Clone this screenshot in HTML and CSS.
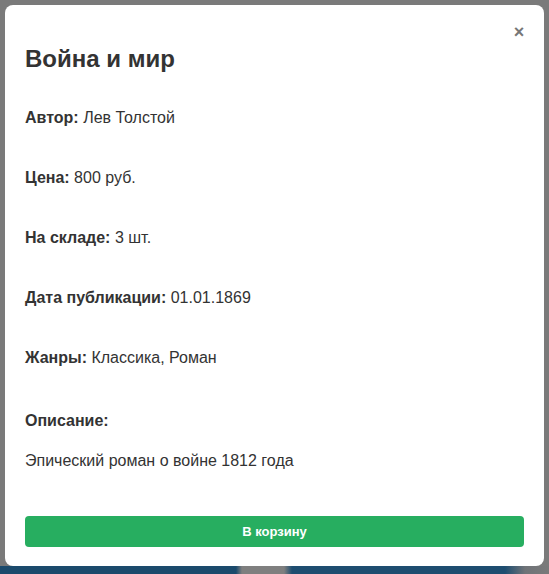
FILE: index.html
```html
<!DOCTYPE html>
<html lang="ru">
<head>
<meta charset="utf-8">
<title>Война и мир</title>
<link rel="stylesheet" href="styles.css">
</head>
<body>
<div class="backdrop">
  <div class="modal">
    <button class="close" aria-label="Закрыть">×</button>
    <h2 class="title">Война и мир</h2>
    <div class="fields">
      <p class="field"><strong>Автор:</strong> Лев Толстой</p>
      <p class="field"><strong>Цена:</strong> 800 руб.</p>
      <p class="field"><strong>На складе:</strong> 3 шт.</p>
      <p class="field"><strong>Дата публикации:</strong> 01.01.1869</p>
      <p class="field"><strong>Жанры:</strong> Классика, Роман</p>
    </div>
    <p class="desc-label"><strong>Описание:</strong></p>
    <p class="desc">Эпический роман о войне 1812 года</p>
    <button class="cart">В корзину</button>
  </div>
  <div class="under"></div>
</div>
</body>
</html>
```
FILE: styles.css
```css
* { box-sizing: border-box; }
html, body { margin: 0; padding: 0; height: 100%; }
body {
  font-family: "Liberation Sans", Arial, sans-serif;
  color: #333;
  background: #7a7a7a;
  overflow: hidden;
}
.backdrop {
  height: 574px;
  display: flex;
  flex-direction: column;
  padding: 5px 5px 0 5px;
}
.modal {
  position: relative;
  background: #fff;
  border-radius: 8px;
  padding: 20px 20px 20px 20px;
  height: 561px;
  display: flex;
  flex-direction: column;
}
.under {
  height: 8px;
  margin: 0 -5px;
  background: linear-gradient(90deg, #1b4a6c 0, #1b4a6c 236px, #7f7f7f 242px, #7f7f7f 284px, #1e4d70 292px, #1e4d70 505px, #6f7378 525px, #7a7a7a 549px);
}
.close {
  position: absolute;
  top: 13px;
  right: 15px;
  border: 0;
  background: none;
  padding: 0;
  font-family: "Liberation Sans", Arial, sans-serif;
  font-size: 18px;
  font-weight: bold;
  line-height: 28px;
  width: 20px;
  color: #777;
  cursor: pointer;
}
.title {
  margin: 20px 0 0 0;
  font-size: 24px;
  line-height: 28px;
  font-weight: bold;
  color: #333;
}
.fields {
  margin-top: 35px;
  display: flex;
  flex-direction: column;
  gap: 40px;
}
.field, .desc-label, .desc {
  margin: 0;
  font-size: 16px;
  line-height: 20px;
}
.desc-label { margin-top: 43px; }
.desc { margin-top: 20px; }
.cart {
  margin-top: auto;
  margin-bottom: -1px;
  height: 31px;
  border: 0;
  border-radius: 4px;
  background: #27ae60;
  color: #fff;
  font-family: "Liberation Sans", Arial, sans-serif;
  font-size: 13px;
  font-weight: bold;
  cursor: pointer;
}
```
